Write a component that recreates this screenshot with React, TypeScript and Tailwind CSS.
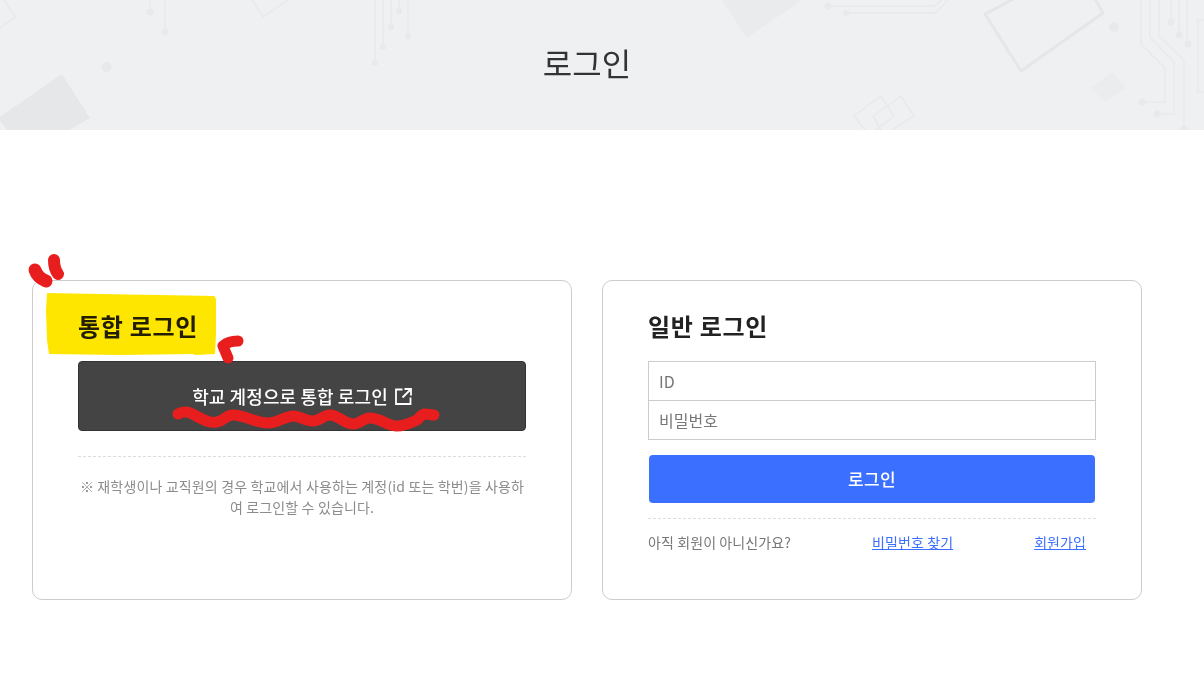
export default function App() {
  const font = { fontFamily: '"Noto Sans CJK KR", "Noto Sans", sans-serif' };
  return (
    <div className="relative min-h-[684px] bg-white overflow-hidden text-[#222]" style={font}>
      <header className="relative h-[130px] bg-[#eff0f2] flex items-center justify-center pr-[30px] overflow-hidden">
        <svg className="absolute inset-0" width="1204" height="130" viewBox="0 0 1204 130" fill="none">
          <g stroke="#e8e9eb" strokeWidth="1.5">
            <path d="M4 0 L15 17 L0 28" />
            <path d="M150 0 V12 M165 0 V32" />
            <path d="M252 0 L263 17 L288 0" />
            <path d="M375 0 V63 M383 0 V47 M391 0 V27 M399 0 V10 M408 0 V36" />
            <path d="M830 6 H934 L942 0 M848 13 H935 L948 0" />
            <path d="M1141 0 V44 L1165 68 V102 H1142 M1150 0 V37 L1174 62 V114 H1156 M1159 0 V36 L1184 60 V130" />
            <path d="M1171 0 V22 M1179 0 V34 M1187 0 V44" />
            <path d="M1204 20 H1198 V92 H1204" />
            <path d="M854 116 L881 96 L894 116 L869 135 Z M873 116 L901 96 L914 116 L884 135 Z" />
          </g>
          <path d="M985 14 L1021 71 L1103 13 L1091 -8 L1027 -8 Z" stroke="#e5e6e8" strokeWidth="3" />
          <g fill="#e8e9eb">
            <circle cx="150" cy="12" r="3.500" /><circle cx="165" cy="32" r="3.500" /><ellipse cx="106.500" cy="67" rx="5" ry="5" />
            <circle cx="375" cy="63" r="3" /><circle cx="383" cy="47" r="3" /><circle cx="391" cy="27" r="3" /><circle cx="399" cy="11" r="3" /><circle cx="408" cy="36" r="3" />
            <circle cx="828" cy="6" r="3.500" /><circle cx="846" cy="13" r="3" />
            <ellipse cx="1114" cy="27" rx="5" ry="5" /><circle cx="1171" cy="22" r="3.500" /><circle cx="1179" cy="35" r="3.500" /><circle cx="1188" cy="44" r="3.500" />
            <circle cx="1142" cy="102" r="3.500" /><circle cx="1157" cy="114" r="3.500" /><circle cx="1184" cy="129" r="3.500" />
            <path d="M-2 118 L62 74 L90 118 L69 130 L7 130 Z" fill="#e6e7e9" />
            <path d="M722 0 L747 38 L802 0 Z" fill="#eaebed" />
            <path d="M1091 88 L1112 72 L1126 88 L1105 102 Z" fill="#ebecee" />
          </g>
        </svg>
        <h1 className="relative text-[32px] font-normal text-[#333] leading-none -mt-[6px]">로그인</h1>
      </header>

      <main className="flex gap-[30px] pl-[32px] pt-[150px]">
        <section className="w-[540px] h-[320px] border border-[#ccc] rounded-[10px] px-[45px] pt-[27px]">
          <h2 className="relative text-[24px] font-bold text-[#222] tracking-[0.7px] leading-[36px] mb-[17px]">통합 로그인</h2>
          <button className="w-[448px] h-[70px] bg-[#444] border border-[#333] rounded-[4px] flex items-center justify-center gap-[7px] text-white text-[18px] font-medium tracking-[0.1px]">
            학교 계정으로 통합 로그인
            <svg width="17" height="17" viewBox="0 0 17 17" fill="none" stroke="currentColor" strokeWidth="1.8">
              <path d="M7.500 1.500 H1 V16 H15.500 V9.500 M9.500 1 H16 V7.500 M16 1 L7.500 9.500" />
            </svg>
          </button>
          <div className="border-t border-dashed border-[#ddd] mt-[25px] pt-[19px] text-center text-[14px] tracking-[0.15px] leading-[21px] text-[#8c8c8c]">
            ※ 재학생이나 교직원의 경우 학교에서 사용하는 계정(id 또는 학번)을 사용하여 로그인할 수 있습니다.
          </div>
        </section>

        <section className="w-[540px] h-[320px] border border-[#ccc] rounded-[10px] px-[45px] pt-[27px]">
          <h2 className="text-[24px] font-bold text-[#222] tracking-[0.7px] leading-[36px] mb-[17px]">일반 로그인</h2>
          <div className="w-[448px] h-[79px] border border-[#ccc] flex flex-col text-[16px] text-[#777]">
            <div className="h-[39px] border-b border-[#ccc] flex items-center px-[10px]">ID</div>
            <div className="flex-1 flex items-center px-[10px]">비밀번호</div>
          </div>
          <button className="w-[446px] ml-px h-[48px] mt-[15px] bg-[#3b6fff] rounded-[4px] text-white text-[17px] font-medium tracking-[0.4px]">로그인</button>
          <div className="border-t border-dashed border-[#ddd] mt-[15px] pt-[7px] h-[40px] flex items-center text-[14px] tracking-[0.1px] text-[#777] w-[448px]">
            <span className="w-[224px]">아직 회원이 아니신가요?</span>
            <a className="underline text-[#3b6fff]">비밀번호 찾기</a>
            <a className="underline text-[#3b6fff] ml-[81px]">회원가입</a>
          </div>
        </section>
      </main>

      <svg className="absolute left-0 top-0 pointer-events-none mix-blend-multiply" width="1204" height="684" viewBox="0 0 1204 684" fill="none">
        <path d="M47 293 L100 294 L160 295 L214 296 Q216 297 216 300 L216 333 L215 354 L195 355 L193 354 L120 355 L49 354 L47 340 L46 310 Z" fill="#ffe600" />
      </svg>
      <svg className="absolute left-0 top-0 pointer-events-none" width="1204" height="684" viewBox="0 0 1204 684" fill="none">
        <g stroke="#e81e1e" strokeLinecap="round" strokeLinejoin="round">
          <path d="M35 270 C37 276 41 279 46 281" strokeWidth="13" />
          <path d="M54 260 C54 266 55 270 58 274" strokeWidth="12" />
          <path d="M238 341 C230 341 226 343 223 346 L228 358" strokeWidth="11" />
          <path d="M178 414 C186 409 192 414 200 418 C206 421 210 423 217 422 C224 421 226 415 233 415 C245 415 255 423 268 423 C278 423 283 417 293 416 C300 416 305 421 313 421 C320 421 323 415 330 415 C338 415 345 424 353 424 C360 424 363 418 370 418 C380 418 388 426 397 426 C405 426 410 423 417 420 C420 417 421 415 424 414 C428 414 431 415 434 415" strokeWidth="11" />
        </g>
      </svg>
    </div>
  );
}
